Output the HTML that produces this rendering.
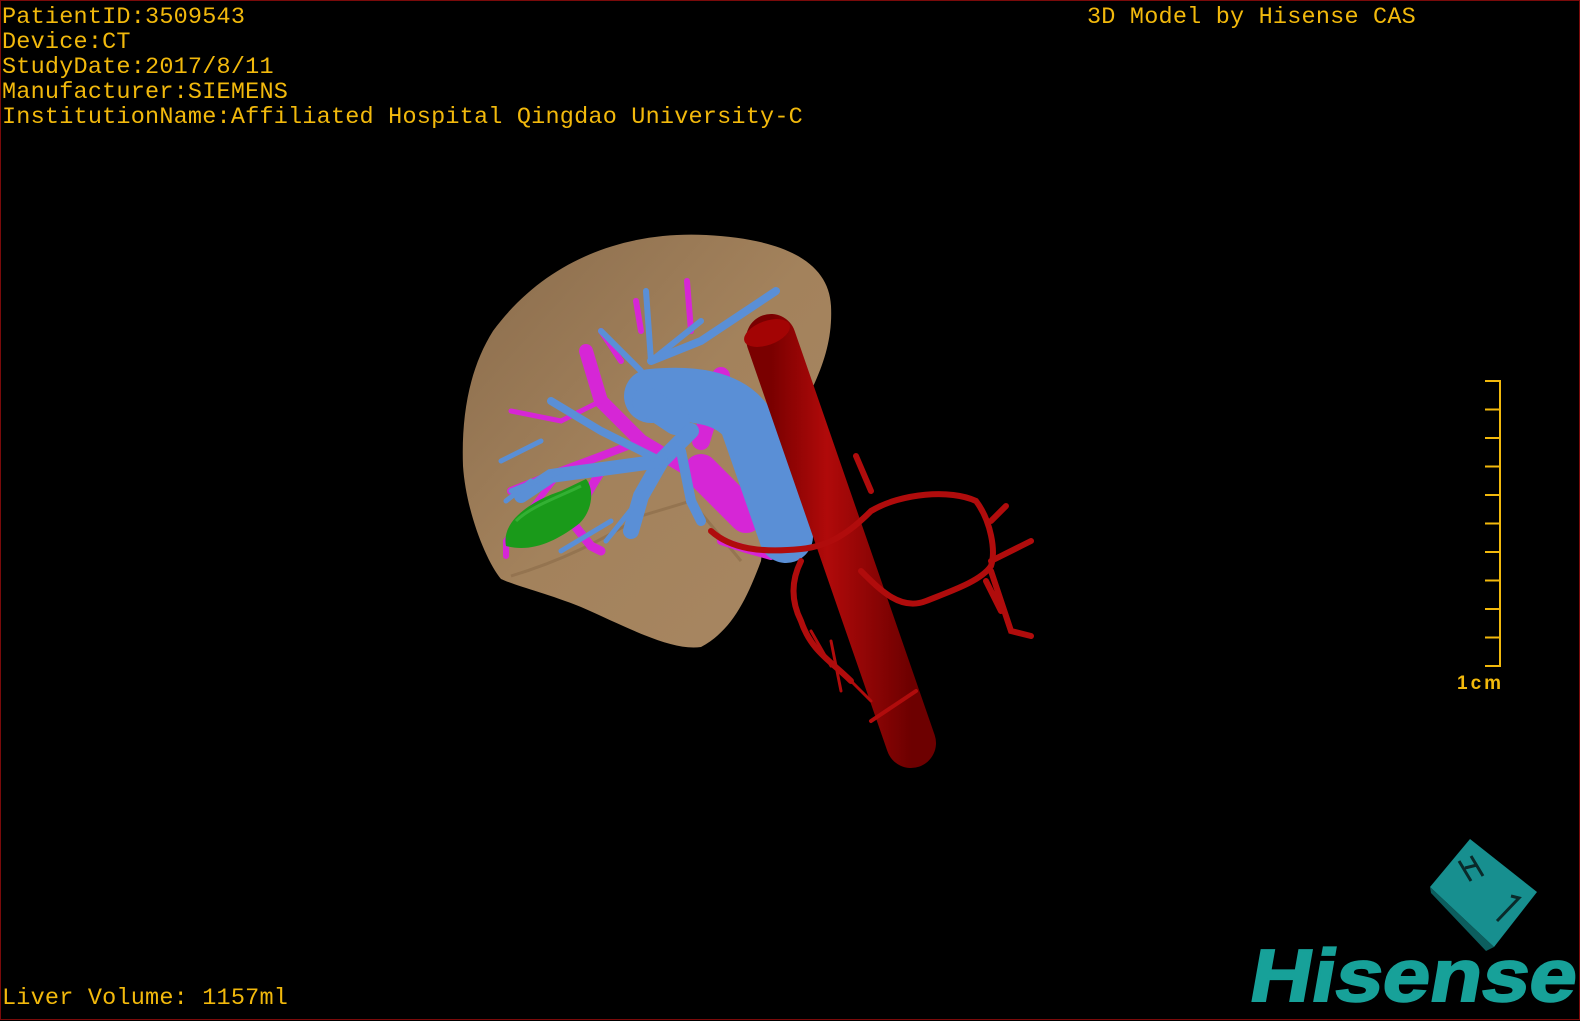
<!DOCTYPE html>
<html><head><meta charset="utf-8"><style>
html,body{margin:0;padding:0;background:#000;}
body{width:1580px;height:1020px;position:relative;overflow:hidden;box-sizing:border-box;border:1px solid #7a0a0a;}
.t{position:absolute;color:#f2b90c;font-family:"Liberation Mono",monospace;font-size:23.5px;line-height:25px;white-space:pre;letter-spacing:0.2px;}
svg{position:absolute;left:0;top:0;}
</style></head><body>
<svg width="1580" height="1020" viewBox="0 0 1580 1020">
<defs>
<linearGradient id="liv" x1="0" y1="0" x2="1" y2="1">
<stop offset="0" stop-color="#8a6c4c"/><stop offset="0.5" stop-color="#a3825c"/><stop offset="1" stop-color="#a88762"/></linearGradient>
<linearGradient id="ivc" x1="0" y1="0" x2="1" y2="0">
<stop offset="0" stop-color="#7a0000"/><stop offset="0.4" stop-color="#b00a0a"/><stop offset="1" stop-color="#6d0000"/></linearGradient>
</defs>
<!-- liver -->
<path d="M492,330 C545,258 625,230 705,234 C785,238 828,262 830,305 C832,345 818,375 800,410 L770,470 L760,560 C745,600 730,630 700,646 C670,650 630,628 580,606 C545,592 515,585 500,578 C485,560 465,510 462,465 C460,410 470,365 492,330 Z" fill="url(#liv)"/>
<path d="M510,575 C560,560 600,540 640,515 L690,500 L740,560" fill="none" stroke="#8a6a48" stroke-width="3" opacity="0.6"/>
<!-- magenta portal -->
<g stroke="#d626d6" fill="none" stroke-linecap="round">
<path d="M745,515 L690,470 L640,440 L600,400 L585,350" stroke-width="14"/>
<path d="M745,515 L700,470" stroke-width="34"/>
<path d="M720,375 L700,440" stroke-width="18"/>
<path d="M640,440 L560,470 L510,490" stroke-width="8"/>
<path d="M600,470 L570,520 L590,545 L600,550" stroke-width="9"/>
<path d="M560,470 L505,540 L505,555" stroke-width="6"/>
<path d="M600,400 L560,420 L510,410" stroke-width="5"/>
<path d="M640,330 L635,300 M690,330 L686,280 M620,360 L600,330" stroke-width="6"/>
<path d="M720,540 L745,548 L770,555" stroke-width="8"/>
</g>
<!-- green gallbladder -->
<path d="M505,545 C500,520 530,500 560,490 L585,478 C595,490 590,515 575,525 C555,540 530,552 505,545 Z" fill="#1a9a1a"/>
<path d="M515,520 C530,505 560,495 580,485" stroke="#45c045" stroke-width="3" fill="none" opacity=".6"/>
<!-- blue hepatic -->
<g stroke="#5a8fd6" fill="none" stroke-linecap="round">
<path d="M650,395 C700,390 730,400 745,420 L785,535" stroke-width="54"/>
<path d="M645,400 L675,420" stroke-width="28"/>
<path d="M690,430 L660,460 L640,495 L630,530" stroke-width="16"/>
<path d="M660,460 L550,475 L520,495" stroke-width="14"/>
<path d="M660,460 L600,430 L550,400" stroke-width="8"/>
<path d="M680,450 L690,500 L700,520" stroke-width="10"/>
<path d="M650,360 L700,340 L775,290" stroke-width="8"/>
<path d="M650,360 L645,290 M640,370 L600,330 M650,360 L700,320" stroke-width="6"/>
<path d="M560,470 L510,490 M540,440 L500,460 M530,480 L505,500 M610,520 L560,550 M645,490 L605,540" stroke-width="5"/>
</g>
<!-- IVC -->
<path d="M770,338 L910,742" stroke="url(#ivc)" stroke-width="50" stroke-linecap="round"/>
<ellipse cx="766" cy="332" rx="24" ry="12" transform="rotate(-20 766 332)" fill="#a30404"/>
<!-- arteries -->
<g stroke="#b00c0c" fill="none" stroke-linecap="round" stroke-width="6">
<path d="M710,530 C730,548 760,552 800,548 C830,545 850,530 870,510 C900,492 950,488 975,500 C990,520 995,550 990,565 C980,580 950,590 925,600 C900,610 880,590 860,570"/>
<path d="M800,560 C790,580 790,600 800,620 C810,650 830,660 850,680"/>
<path d="M855,455 L870,490 M990,520 L1005,505 M990,560 L1020,545 L1030,540 M990,570 L1000,600 L1010,630 L1030,635 M985,580 L1000,610"/>
<path d="M830,640 L840,690 M850,680 L870,700 M810,630 L830,665" stroke-width="3"/>
<path d="M870,720 L915,690" stroke-width="4"/>
</g>
<!-- scale bar -->
<g stroke="#f2b90c" stroke-width="2">
<line x1="1499" y1="380" x2="1499" y2="666"/>
<line x1="1484" y1="380" x2="1500" y2="380"/><line x1="1484" y1="408.5" x2="1499" y2="408.5"/>
<line x1="1484" y1="437" x2="1499" y2="437"/><line x1="1484" y1="465.5" x2="1499" y2="465.5"/>
<line x1="1484" y1="494" x2="1499" y2="494"/><line x1="1484" y1="522.5" x2="1499" y2="522.5"/>
<line x1="1484" y1="551" x2="1499" y2="551"/><line x1="1484" y1="579.5" x2="1499" y2="579.5"/>
<line x1="1484" y1="608" x2="1499" y2="608"/><line x1="1484" y1="636.5" x2="1499" y2="636.5"/>
<line x1="1484" y1="665" x2="1500" y2="665"/>
</g>
<text x="1456" y="688" fill="#f2b90c" font-family="Liberation Sans,sans-serif" font-size="19" font-weight="bold" letter-spacing="3">1cm</text>
<!-- cube -->
<polygon points="1469,838 1536,891 1493,946 1429,886" fill="#178f8f"/>
<polygon points="1429,886 1493,946 1485,950 1430,892" fill="#0c5e5e"/>
<g stroke="#0a2a2a" stroke-width="3" fill="none">
<path d="M1458,860 L1470,880 M1470,855 L1482,875 M1464,867 L1476,864"/>
<path d="M1510,895 L1518,897 L1496,920"/>
</g>
<!-- Hisense -->
<text x="0" y="0" fill="#17a199" font-family="Liberation Sans,sans-serif" font-weight="bold" font-size="74" stroke="#17a199" stroke-width="2" transform="translate(1246 1000) skewX(-10) scale(1.15 1)">Hisense</text>
</svg>
<div class="t" style="left:1px;top:4px;">PatientID:3509543
Device:CT
StudyDate:2017/8/11
Manufacturer:SIEMENS
InstitutionName:Affiliated Hospital Qingdao University-C</div>
<div class="t" style="left:1086px;top:4px;">3D Model by Hisense CAS</div>
<div class="t" style="left:1px;top:985px;">Liver Volume: 1157ml</div>
</body></html>
